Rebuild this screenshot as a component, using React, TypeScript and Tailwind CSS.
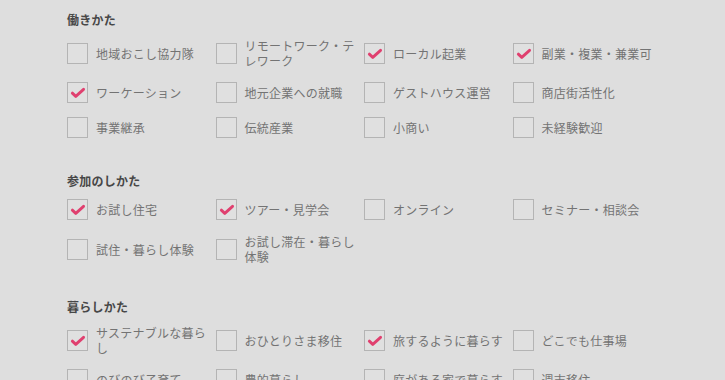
import React from "react";

type Item = { label: string; checked?: boolean };
type Section = { title: string; items: Item[] };

const sections: Section[] = [
  {
    title: "働きかた",
    items: [
      { label: "地域おこし協力隊" },
      { label: "リモートワーク・テレワーク" },
      { label: "ローカル起業", checked: true },
      { label: "副業・複業・兼業可", checked: true },
      { label: "ワーケーション", checked: true },
      { label: "地元企業への就職" },
      { label: "ゲストハウス運営" },
      { label: "商店街活性化" },
      { label: "事業継承" },
      { label: "伝統産業" },
      { label: "小商い" },
      { label: "未経験歓迎" },
    ],
  },
  {
    title: "参加のしかた",
    items: [
      { label: "お試し住宅", checked: true },
      { label: "ツアー・見学会", checked: true },
      { label: "オンライン" },
      { label: "セミナー・相談会" },
      { label: "試住・暮らし体験" },
      { label: "お試し滞在・暮らし体験" },
    ],
  },
  {
    title: "暮らしかた",
    items: [
      { label: "サステナブルな暮らし", checked: true },
      { label: "おひとりさま移住" },
      { label: "旅するように暮らす", checked: true },
      { label: "どこでも仕事場" },
      { label: "のびのび子育て" },
      { label: "農的暮らし" },
      { label: "庭がある家で暮らす" },
      { label: "週末移住" },
    ],
  },
];

function CheckBox({ checked }: { checked?: boolean }) {
  return (
    <span className="flex h-[21px] w-[21px] shrink-0 items-center justify-center border border-[#b4b4b4] bg-[#e0e0e0]">
      {checked && (
        <svg width="21" height="21" viewBox="0 0 21 21" className="block">
          <path
            d="M4.8 11.2 L8.6 14.8 L17.2 7"
            fill="none"
            stroke="#e0406f"
            strokeWidth="3.2"
            strokeLinecap="round"
            strokeLinejoin="round"
          />
        </svg>
      )}
    </span>
  );
}

export default function App() {
  return (
    <div
      className="min-h-screen w-full bg-[#dedede] pl-[67px] pt-[10px]"
      style={{ fontFamily: '"Noto Sans CJK JP", "Noto Sans", sans-serif' }}
    >
      <div className="flex w-[594px] flex-col gap-[33px]">
        {sections.map((s) => (
          <section key={s.title}>
            <h2 className="mb-[8px] h-5 text-[12px] font-bold leading-5 tracking-[0.25px] text-[#474747]">
              {s.title}
            </h2>
            <div className="grid grid-cols-4 items-center gap-y-[14px]">
              {s.items.map((it) => (
                <label key={it.label} className="flex items-center gap-[8px] pr-[0px]">
                  <CheckBox checked={it.checked} />
                  <span className="min-w-0 flex-1 text-[12px] leading-[15px] tracking-[0.25px] text-[#737373]">
                    {it.label}
                  </span>
                </label>
              ))}
            </div>
          </section>
        ))}
      </div>
    </div>
  );
}
